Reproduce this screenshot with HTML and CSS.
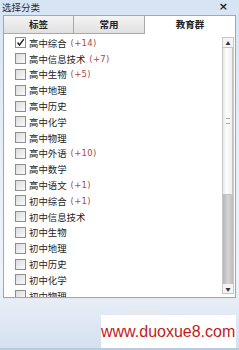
FILE: index.html
```html
<!DOCTYPE html>
<html>
<head>
<meta charset="utf-8">
<link rel="stylesheet" href="styles.css">
</head>
<body>
<div class="window">
  <div class="titlebar">
    <span class="title">选择分类</span>
    <span class="close">×</span>
  </div>
  <div class="panel">
    <div class="tabs">
      <div class="tab t1">标签</div>
      <div class="tab t2">常用</div>
      <div class="tab t3 active">教育群</div>
    </div>
    <div class="content">
      <ul class="list">
        <li><span class="cb checked"><svg width="9" height="9" viewBox="0 0 9 9"><path d="M1.5 4.5 L3.5 7 L7.8 1.2" fill="none" stroke="#222" stroke-width="1.4"/></svg></span>高中综合<span class="cnt">(+14)</span></li>
        <li><span class="cb"></span>高中信息技术<span class="cnt">(+7)</span></li>
        <li><span class="cb"></span>高中生物<span class="cnt">(+5)</span></li>
        <li><span class="cb"></span>高中地理</li>
        <li><span class="cb"></span>高中历史</li>
        <li><span class="cb"></span>高中化学</li>
        <li><span class="cb"></span>高中物理</li>
        <li><span class="cb"></span>高中外语<span class="cnt">(+10)</span></li>
        <li><span class="cb"></span>高中数学</li>
        <li><span class="cb"></span>高中语文<span class="cnt">(+1)</span></li>
        <li><span class="cb"></span>初中综合<span class="cnt">(+1)</span></li>
        <li><span class="cb"></span>初中信息技术</li>
        <li><span class="cb"></span>初中生物</li>
        <li><span class="cb"></span>初中地理</li>
        <li><span class="cb"></span>初中历史</li>
        <li><span class="cb"></span>初中化学</li>
        <li><span class="cb"></span>初中物理</li>
      </ul>
      <div class="scrollbar">
        <div class="arrow up">▲</div>
        <div class="thumb"><span class="grip"></span></div>
        <div class="track"></div>
        <div class="arrow down">▼</div>
      </div>
    </div>
  </div>
  <div class="footer">
    <div class="faint">
      <span class="fbtn"></span>
    </div>
    <div class="wm-row">
      <div class="watermark">www.duoxue8.com</div>
    </div>
  </div>
</div>
</body>
</html>
```
FILE: styles.css
```css
html, body {
  margin: 0;
  padding: 0;
  width: 239px;
  height: 350px;
  overflow: hidden;
  background: #dfe9f5;
  font-family: "Noto Sans CJK SC", "Liberation Sans", sans-serif;
}
.window {
  width: 239px;
  height: 350px;
  box-sizing: border-box;
  padding: 0 3px 0 3px;
  background: linear-gradient(to bottom, #d7e4f3 0%, #e6eef8 40%, #eef3fa 80%, #d5e1f0 100%);
  border-bottom: 2px solid #b9cbe2;
  display: flex;
  flex-direction: column;
}
.titlebar {
  height: 14px;
  display: flex;
  align-items: center;
  justify-content: space-between;
  padding: 0 8px 0 0;
}
.title {
  font-size: 9.5px;
  color: #1e2a3a;
  line-height: 12px;
  margin-left: -1px;
}
.close {
  font-family: "DejaVu Sans", sans-serif;
  font-size: 11px;
  font-weight: bold;
  color: #222;
  line-height: 12px;
}
.panel {
  margin-top: 1px;
  height: 283px;
  background: #fff;
  border: 1px solid #9fa6b0;
  border-top: none;
  box-sizing: border-box;
  display: flex;
  flex-direction: column;
  overflow: hidden;
}
.tabs {
  height: 19px;
  display: flex;
  flex-shrink: 0;
}
.tab {
  box-sizing: border-box;
  height: 19px;
  font-size: 9.5px;
  line-height: 17px;
  text-align: center;
  color: #222;
  font-weight: bold;
  background: linear-gradient(to bottom, #f4f4f4, #e0e0e0);
  border-top: 1px solid #a8a8a8;
  border-right: 1px solid #a8a8a8;
  border-bottom: 1px solid #a8a8a8;
}
.t1 { width: 70px; border-left: none; }
.t2 { width: 71px; }
.t3 { flex: 1; }
.tab.active {
  background: #fff;
  border-bottom: none;
  border-right: none;
}
.content {
  flex: 1;
  display: flex;
  min-height: 0;
}
.list {
  list-style: none;
  margin: 0;
  padding: 1px 0 0 11px;
  flex: 1;
  overflow: hidden;
}
.list li {
  height: 15.8px;
  display: flex;
  align-items: center;
  font-size: 9.4px;
  color: #222;
  white-space: nowrap;
}
.cb {
  width: 9px;
  height: 9px;
  border: 1px solid #8d8d8d;
  background: linear-gradient(135deg, #dcdcdc, #fafafa);
  margin-right: 3px;
  flex-shrink: 0;
  display: flex;
  align-items: center;
  justify-content: center;
}
.cb.checked {
  background: #fff;
}
.cnt {
  color: #a84848;
  margin-left: 4px;
  font-family: "DejaVu Sans", sans-serif;
  font-size: 8.5px;
  letter-spacing: 0.3px;
}
.scrollbar {
  width: 12px;
  margin: 3px 1px 3px 0;
  display: flex;
  flex-direction: column;
  border: 1px solid #c8c8c8;
  box-sizing: border-box;
}
.arrow {
  height: 9px;
  font-size: 5px;
  line-height: 9px;
  text-align: center;
  color: #333;
  background: #f4f4f4;
  flex-shrink: 0;
}
.thumb {
  height: 146px;
  background: linear-gradient(to right, #e8e8e8, #fdfdfd 40%, #f0f0f0);
  border: 1px solid #c4c4c4;
  border-left: none;
  display: flex;
  align-items: center;
  justify-content: center;
}
.grip {
  width: 4px;
  height: 6px;
  border-top: 1px solid #aaa;
  border-bottom: 1px solid #aaa;
  box-sizing: border-box;
  position: relative;
}
.track {
  flex: 1;
  background: linear-gradient(to right, #b6b6b6, #d6d6d6 50%, #bcbcbc);
}
.footer {
  flex: 1;
  display: flex;
  flex-direction: column;
}
.faint {
  height: 14px;
  display: flex;
  align-items: flex-end;
  justify-content: center;
  border-top: 1px solid #e4e9f0;
}
.fbtn {
  width: 34px;
  height: 2px;
  background: #f3e6d6;
  margin-left: 50px;
}
.wm-row {
  display: flex;
  justify-content: flex-end;
  margin-top: 2px;
}
.watermark {
  width: 135px;
  height: 33px;
  background: #fff;
  color: #c41a1a;
  font-family: "Liberation Sans", sans-serif;
  font-size: 16px;
  line-height: 33px;
  text-align: right;
  padding-right: 2px;
  box-sizing: border-box;
}
```
